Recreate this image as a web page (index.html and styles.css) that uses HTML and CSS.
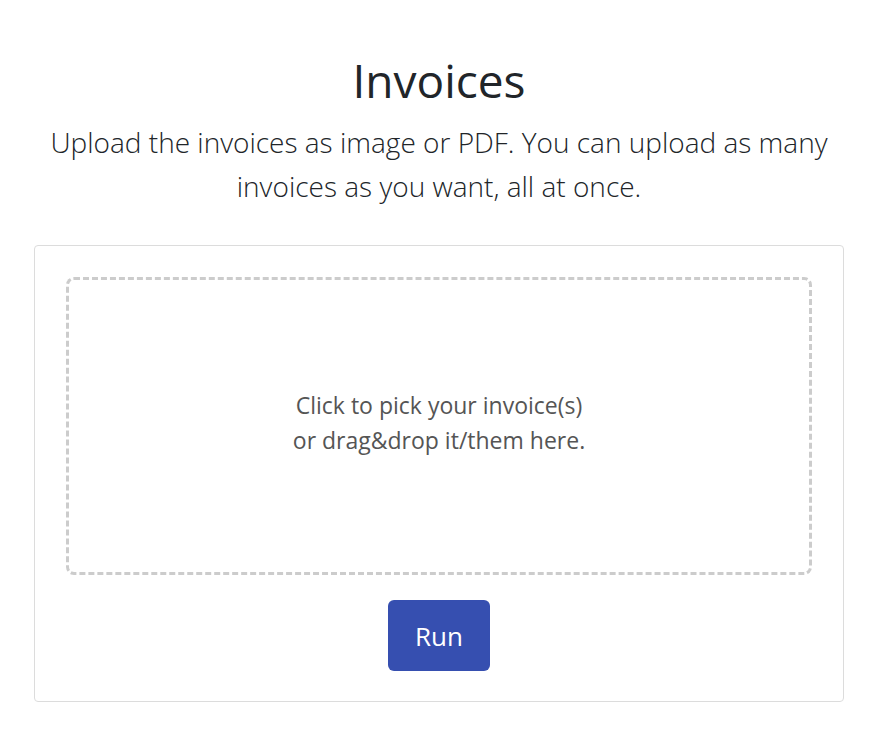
FILE: index.html
```html
<!DOCTYPE html>
<html>
  <head>
    <title>Invoices</title>
    <link rel="stylesheet" href="styles.css">
  </head>
  <body>
    <main class="page">
      <header class="intro">
        <h1>Invoices</h1>
        <p>Upload the invoices as image or PDF. You can upload as many invoices as you want, all at once.</p>
      </header>
      <section class="card">
        <label class="dropzone">
          <span class="dropzone-text">Click to pick your invoice(s)<br>or drag&amp;drop it/them here.</span>
        </label>
        <div class="actions">
          <button class="run-btn" type="button">Run</button>
        </div>
      </section>
    </main>
  </body>
</html>
```

FILE: styles.css
```css
/* Basic styling for the page */
body {
  font-family: "Open Sans", "Noto Sans", sans-serif;
  color: #212529;
  margin: 0;
  padding: 0;
  background: #fff;
}
.page {
  width: 810px;
  margin: 0 0 0 34px;
  padding-top: 50px;
}
.intro {
  text-align: center;
}
.intro h1 {
  font-size: 46px;
  font-weight: 400;
  line-height: 60px;
  margin: 0;
}
.intro p {
  font-size: 28px;
  font-weight: 300;
  line-height: 44px;
  margin: 0 auto;
  width: 809px;
  padding-top: 10px;
}
.card {
  margin-top: 37px;
  border: 1px solid #dcdcdc;
  border-radius: 4px;
  padding: 31px 31px 30px;
}
.dropzone {
  display: flex;
  align-items: center;
  justify-content: center;
  height: 292px;
  border: 3px dashed #cccccc;
  border-radius: 8px;
  text-align: center;
  font-size: 23px;
  line-height: 35px;
  color: #555;
  cursor: pointer;
}
.dropzone-text {
  margin-bottom: 7px;
}
.actions {
  display: flex;
  justify-content: center;
  padding-top: 25px;
}
.run-btn {
  font-family: inherit;
  font-size: 26px;
  color: #fff;
  background: #364fb0;
  border: none;
  border-radius: 6px;
  height: 71px;
  padding: 0 27px;
  cursor: pointer;
}
```
